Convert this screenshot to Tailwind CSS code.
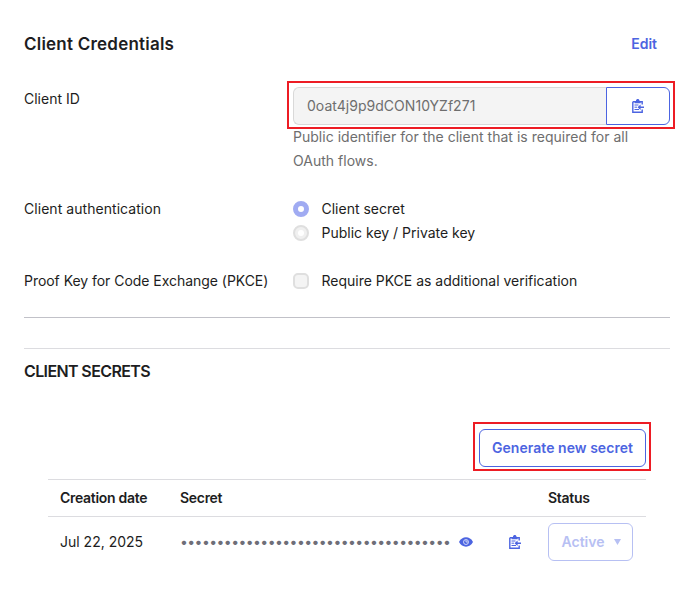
<!DOCTYPE html>
<html lang="en">
<head>
<meta charset="utf-8">
<title>Client Credentials</title>
<script src="https://cdn.jsdelivr.net/npm/@tailwindcss/browser@4"></script>
</head>
<body class="bg-white font-[Inter,sans-serif] text-[14px] leading-6 text-[#1d1d21]">
<svg class="hidden">
  <symbol id="clip" viewBox="0 0 12 14">
    <path d="M.8 2.800H10.200V5.500M10.200 10.500V13.200H.8V2.800" stroke="currentColor" stroke-width="1.400" fill="none"/>
    <path d="M2.700 4.300V2.300H4V1.200L5 0H6.500L7.500 1.200V2.300H8.600V4.300z" fill="currentColor"/>
    <path d="M2.500 6h4M2.500 8.200h2.500M2.500 10.500h4.500" stroke="currentColor" fill="none"/>
    <path d="M5.500 8.300L8.600 5.500V7.500H12v1.600H8.600v2z" fill="currentColor"/>
  </symbol>
</svg>
<main class="flex h-[616px] w-[694px] flex-col pl-6 pt-8">
  <header class="flex h-6 w-[633px] items-center justify-between">
    <h2 class="text-[17px] font-[560] tracking-[0.22px]">Client Credentials</h2>
    <a class="text-[14px] font-semibold text-[#4c64e1]">Edit</a>
  </header>

  <section class="mt-[25px] flex h-[110px] items-start">
    <div class="w-[263px] shrink-0 pt-[6px]">Client ID</div>
    <div class="w-[388px] shrink-0">
      <div class="flex h-12 w-[388px] border-2 border-[#ed1c24] p-1">
        <div class="flex h-[38px] w-[313px] shrink-0 items-center rounded-l-[6px] border border-r-0 border-[#d9d9d9] bg-[#f4f4f4] pl-[13px] tracking-[0.03px] text-[#6e6e6e]">0oat4j9p9dCON10YZf271</div>
        <div class="flex h-[38px] w-[64px] shrink-0 items-center justify-center rounded-r-[6px] border border-[#4c64e1] text-[#4c64e1]"><svg class="h-[14px] w-3"><use href="#clip"/></svg></div>
      </div>
      <p class="-mt-1 w-[350px] pl-[6px] tracking-[0.02px] text-[#6e6e6e]">Public identifier for the client that is required for all OAuth flows.</p>
    </div>
  </section>

  <section class="mt-[6px] flex h-12">
    <div class="w-[269px] tracking-[0.05px]">Client authentication</div>
    <div>
      <div class="flex h-6 items-center gap-3"><span class="h-4 w-4 rounded-full border-5 border-[#a0abf2] bg-white"></span><span class="pl-[0.5px]">Client secret</span></div>
      <div class="flex h-6 items-center gap-3"><span class="flex h-4 w-4 items-center justify-center rounded-full border-2 border-[#dfdfdf] bg-[#f0f0f0]"><i class="h-[6px] w-[6px] rounded-full bg-white"></i></span><span class="pl-[0.5px]">Public key / Private key</span></div>
    </div>
  </section>

  <section class="mt-6 flex h-6">
    <div class="w-[269px] tracking-[-0.04px]">Proof Key for Code Exchange (PKCE)</div>
    <div class="flex h-6 items-center gap-3"><span class="h-4 w-4 rounded-[5px] border-2 border-[#dfdfdf] bg-[#f4f4f4]"></span><span class="pl-[0.5px] tracking-[-0.01px]">Require PKCE as additional verification</span></div>
  </section>
  <div class="mt-6 h-px w-[646px] shrink-0 bg-[#c1c1c8]"></div>
  <div class="mt-[30px] h-px w-[646px] shrink-0 bg-[#dcdce0]"></div>

  <h3 class="mt-[10px] text-[16px] font-[560] tracking-[-0.62px]">CLIENT SECRETS</h3>

  <div class="mt-[39px] flex h-[50px] w-[627px] justify-end">
    <div class="h-[49px] w-[178px] border-2 border-[#ed1c24] p-1 pt-[5px]">
      <button class="h-[38px] w-[167px] rounded-[6px] border border-[#4c64e1] text-[14px] font-semibold tracking-[0.04px] text-[#4c64e1]">Generate new secret</button>
    </div>
  </div>

  <div class="ml-6 mt-[7px] w-[598px]">
    <div class="flex h-[38px] items-center border-y border-[#dcdce0] pl-3 font-[580] tracking-[-0.3px]">
      <div class="w-[120px]">Creation date</div><div class="w-[368px]">Secret</div><div>Status</div>
    </div>
    <div class="flex h-[50px] items-center pl-3">
      <div class="w-[120px]">Jul 22, 2025</div>
      <div class="flex w-[368px] items-center text-[#4c64e1]">
        <span class="w-[279px] shrink-0 tracking-[-0.57px] whitespace-nowrap text-[#6e6e78]">•••••••••••••••••••••••••••••••••••••</span>
        <svg class="h-[10px] w-[14px]" viewBox="0 0 14 10"><path d="M0 5C3-1.200 11-1.200 14 5 11 11.200 3 11.200 0 5z" fill="currentColor"/><circle cx="7" cy="5" r="2.500" fill="none" stroke="#fff" stroke-width=".7"/><path d="M7 3v2h2" stroke="#fff" stroke-width=".7" fill="none"/></svg>
        <svg class="ml-9 h-[14px] w-3"><use href="#clip"/></svg>
      </div>
      <div class="flex h-[38px] w-[85px] items-center rounded-[6px] border border-[#b7c0f3] pl-[12.5px] font-semibold text-[#b7c0f3]">Active<svg class="ml-[10px] h-[6px] w-[7px]" viewBox="0 0 7 6"><path d="M0 0h7L3.500 6z" fill="currentColor"/></svg></div>
    </div>
  </div>
</main>
</body>
</html>
